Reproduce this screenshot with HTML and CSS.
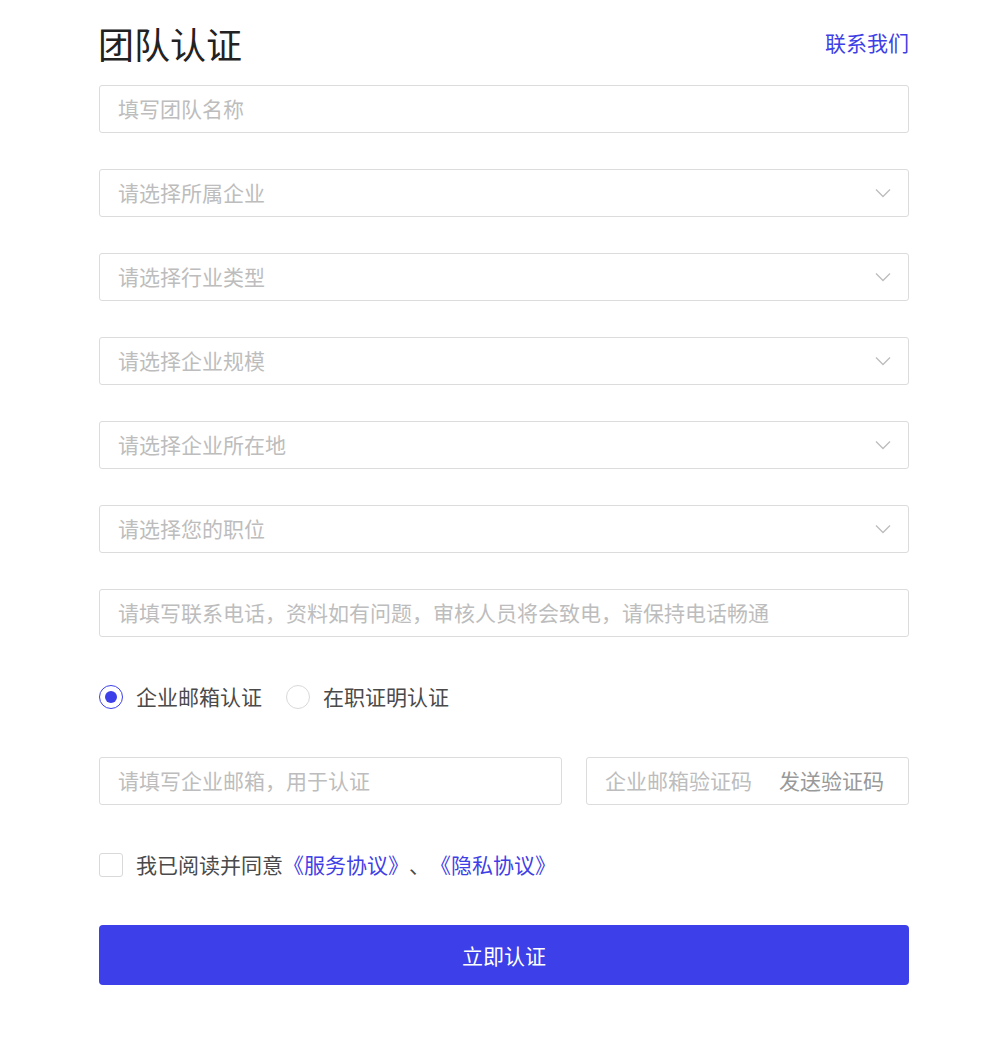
FILE: index.html
```html
<!DOCTYPE html>
<html lang="zh-CN">
<head>
<meta charset="utf-8">
<title>团队认证</title>
<link rel="stylesheet" href="styles.css">
</head>
<body>
<div class="page">
  <div class="header">
    <h1 class="title">团队认证</h1>
    <a class="contact" href="#">联系我们</a>
  </div>
  <div class="field"><span class="ph">填写团队名称</span></div>
  <div class="field select"><span class="ph">请选择所属企业</span><svg class="chev" width="16" height="10" viewBox="0 0 16 10"><polyline points="1,1.5 8,8.5 15,1.5" fill="none" stroke="#bdbdbd" stroke-width="1.3"/></svg></div>
  <div class="field select"><span class="ph">请选择行业类型</span><svg class="chev" width="16" height="10" viewBox="0 0 16 10"><polyline points="1,1.5 8,8.5 15,1.5" fill="none" stroke="#bdbdbd" stroke-width="1.3"/></svg></div>
  <div class="field select"><span class="ph">请选择企业规模</span><svg class="chev" width="16" height="10" viewBox="0 0 16 10"><polyline points="1,1.5 8,8.5 15,1.5" fill="none" stroke="#bdbdbd" stroke-width="1.3"/></svg></div>
  <div class="field select"><span class="ph">请选择企业所在地</span><svg class="chev" width="16" height="10" viewBox="0 0 16 10"><polyline points="1,1.5 8,8.5 15,1.5" fill="none" stroke="#bdbdbd" stroke-width="1.3"/></svg></div>
  <div class="field select"><span class="ph">请选择您的职位</span><svg class="chev" width="16" height="10" viewBox="0 0 16 10"><polyline points="1,1.5 8,8.5 15,1.5" fill="none" stroke="#bdbdbd" stroke-width="1.3"/></svg></div>
  <div class="field last"><span class="ph">请填写联系电话，资料如有问题，审核人员将会致电，请保持电话畅通</span></div>

  <div class="radios">
    <label class="radio"><span class="dot checked"></span><span class="lbl">企业邮箱认证</span></label>
    <label class="radio"><span class="dot"></span><span class="lbl">在职证明认证</span></label>
  </div>

  <div class="email-row">
    <div class="field email"><span class="ph">请填写企业邮箱，用于认证</span></div>
    <div class="field code"><span class="ph">企业邮箱验证码</span><span class="send">发送验证码</span></div>
  </div>

  <div class="agree">
    <span class="box"></span>
    <span class="agree-text">我已阅读并同意<a href="#">《服务协议》</a>、<a href="#">《隐私协议》</a></span>
  </div>

  <button class="submit">立即认证</button>
</div>
</body>
</html>
```

FILE: styles.css
```css
* { box-sizing: border-box; }
html, body { margin: 0; padding: 0; background: #fff; }
body {
  font-family: "Noto Sans CJK SC", "Noto Sans", sans-serif;
  color: #333;
  text-spacing-trim: space-all;
}
.page {
  width: 810px;
  margin-left: 99px;
  padding-top: 19px;
  display: flex;
  flex-direction: column;
}
.header {
  height: 49px;
  display: flex;
  align-items: center;
  justify-content: space-between;
  margin-bottom: 17px;
}
.title {
  margin: -2px 0 0 -1px;
  font-size: 36px;
  font-weight: 400;
  color: #222;
  line-height: 1;
}
.contact {
  font-size: 21px;
  color: #3f3fe6;
  text-decoration: none;
  line-height: 1;
  margin-top: -3px;
}
.field {
  height: 48px;
  border: 1px solid #dcdcdc;
  border-radius: 3px;
  display: flex;
  align-items: center;
  padding: 0 18px 2px;
  margin-bottom: 36px;
  font-size: 21px;
  line-height: 1;
}
.field.last { margin-bottom: 48px; }
.ph { color: #bdbdbd; }
.select { justify-content: space-between; padding-right: 17px; }
.chev { display: block; margin-top: 2px; }
.radios {
  height: 24px;
  display: flex;
  align-items: center;
  gap: 24px;
  margin-bottom: 48px;
}
.radio {
  display: flex;
  align-items: center;
  gap: 13px;
  font-size: 21px;
  color: #4a4a4a;
  line-height: 1;
}
.lbl { margin-top: -2px; }
.dot {
  width: 24px;
  height: 24px;
  border-radius: 50%;
  border: 1px solid #d9d9d9;
  display: flex;
  align-items: center;
  justify-content: center;
}
.dot.checked { border-color: #3d3fe8; }
.dot.checked::after {
  content: "";
  width: 12px;
  height: 12px;
  border-radius: 50%;
  background: #3d3fe8;
}
.email-row {
  display: flex;
  gap: 24px;
  margin-bottom: 48px;
}
.email-row .field { margin-bottom: 0; }
.email { width: 463px; }
.code {
  flex: 1;
  justify-content: space-between;
  padding-right: 24px;
}
.send { color: #999; }
.agree {
  height: 24px;
  display: flex;
  align-items: center;
  gap: 13px;
  margin-bottom: 48px;
}
.box {
  width: 24px;
  height: 24px;
  border: 1px solid #d9d9d9;
  border-radius: 3px;
}
.agree-text {
  font-size: 21px;
  color: #4a4a4a;
  line-height: 1;
  margin-top: -2px;
}
.agree-text a { color: #3f3fe6; text-decoration: none; }
.submit {
  height: 60px;
  width: 100%;
  border: none;
  border-radius: 4px;
  background: #3d3fe8;
  color: #fff;
  font-family: inherit;
  font-size: 21px;
  padding-bottom: 2px;
  cursor: pointer;
}
```
